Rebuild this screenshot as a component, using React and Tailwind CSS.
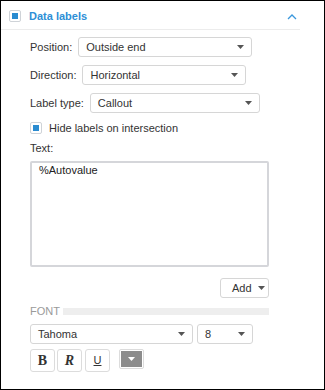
import React from "react";

function Caret({ color = "#555" }) {
  return (
    <svg width="7" height="4" viewBox="0 0 7 4" className="shrink-0">
      <path d="M0 0 L7 0 L3.5 4 Z" fill={color} />
    </svg>
  );
}

function Select({ value, width }) {
  return (
    <div
      className={`flex items-center justify-between h-[20px] border border-[#d6d6d6] rounded-[3px] bg-white pl-[7px] pr-[7px] ${width}`}
    >
      <span className="text-[#333]">{value}</span>
      <Caret />
    </div>
  );
}

function Check() {
  return (
    <div className="w-[12px] h-[12px] border border-[#cfd3d8] rounded-[2px] bg-white flex items-center justify-center shrink-0">
      <div className="w-[6px] h-[6px] bg-[#2a8bd0]" />
    </div>
  );
}

function App() {
  return (
    <div
      className="w-[325px] h-[390px] border border-black bg-white text-[11px] text-[#333] overflow-hidden"
      style={{ fontFamily: '"Liberation Sans", Arial, sans-serif' }}
    >
      {/* header */}
      <div className="flex items-start h-[29px] w-[299px] border-b border-[#ececec] pl-[8px] pt-[9px]">
        <Check />
        <span className="ml-[8px] font-bold text-[#2e8fd6] leading-[13px]">Data labels</span>
        <svg width="10" height="7" viewBox="0 0 10 7" className="ml-auto mr-[3px] mt-[3px]">
          <path d="M1 6 L5 2 L9 6" stroke="#3a97dc" strokeWidth="1.3" fill="none" />
        </svg>
      </div>

      <div className="pl-[29px] pt-[7px] w-[268px]">
        <div className="flex items-center gap-[6px] h-[20px]">
          <span>Position:</span>
          <Select value="Outside end" width="w-[174px]" />
        </div>
        <div className="flex items-center gap-[6px] h-[20px] mt-[8px]">
          <span>Direction:</span>
          <Select value="Horizontal" width="w-[164px]" />
        </div>
        <div className="flex items-center gap-[6px] h-[20px] mt-[8px]">
          <span>Label type:</span>
          <Select value="Callout" width="w-[170px]" />
        </div>

        <div className="flex items-center h-[12px] mt-[9px]">
          <Check />
          <span className="ml-[7px]">Hide labels on intersection</span>
        </div>

        <div className="mt-[8px] leading-[13px]">Text:</div>

        <div className="mt-[6px] w-[239px] h-[106px] border-2 border-[#d5d6da] rounded-[2px] px-[7px] pt-[1px] leading-[13px] text-[#222] text-[11px]">
          %Autovalue
        </div>

        <div className="flex justify-end mt-[11px]">
          <div className="flex items-center h-[20px] w-[49px] border border-[#d6d6d6] rounded-[3px] pl-[11px] gap-[6px]">
            <span>Add</span>
            <Caret />
          </div>
        </div>

        <div className="flex items-center mt-[9px] h-[8px]">
          <span className="text-[#9a9a9a] text-[11px] leading-[8px]">FONT</span>
          <div className="ml-[3px] flex-1 h-[7px] bg-[#eeeeee]" />
        </div>

        <div className="flex gap-[4px] mt-[9px]">
          <Select value="Tahoma" width="w-[163px]" />
          <Select value="8" width="w-[56px]" />
        </div>

        <div className="flex items-start mt-[5px]">
          <div
            className="w-[25px] h-[23px] border border-[#dcdcdc] rounded-[3px] flex items-center justify-center font-bold text-[14px] text-[#333]"
            style={{ fontFamily: '"Liberation Serif", "Times New Roman", serif' }}
          >
            B
          </div>
          <div
            className="ml-[2px] w-[25px] h-[23px] border border-[#dcdcdc] rounded-[3px] flex items-center justify-center font-bold italic text-[14px] text-[#333]"
            style={{ fontFamily: '"Liberation Serif", "Times New Roman", serif' }}
          >
            R
          </div>
          <div className="ml-[3px] w-[25px] h-[23px] border border-[#dcdcdc] rounded-[3px] flex items-center justify-center text-[11px] underline text-[#333]">
            U
          </div>
          <div className="ml-[9px] w-[25px] h-[20px] border border-[#dcdcdc] rounded-[2px] p-[1px]">
            <div className="w-full h-full bg-[#8c8c8c] flex items-center justify-center">
              <Caret color="#ffffff" />
            </div>
          </div>
        </div>
      </div>
    </div>
  );
}

export default App;
